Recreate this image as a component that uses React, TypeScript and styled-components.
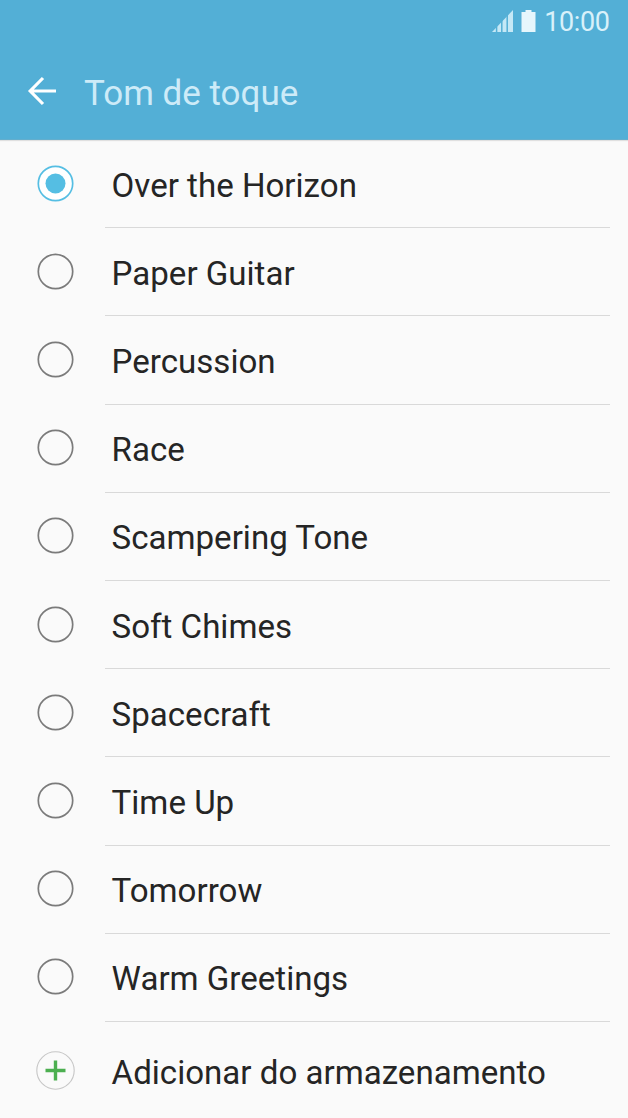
import React from 'react';
import styled, { createGlobalStyle } from 'styled-components';

const GlobalStyle = createGlobalStyle`
  * { box-sizing: border-box; }
  body { margin: 0; background: #fafafa; font-family: Roboto, sans-serif; overflow: hidden; }
`;

const Screen = styled.div`
  width: 628px;
  height: 1118px;
  background: #fafafa;
  overflow: hidden;
`;

const Header = styled.header`
  height: 140px;
  background: #53afd6;
  border-bottom: 1px solid #64aecd;
  box-shadow: 0 1px 1px rgba(0, 0, 0, 0.1);
`;

const StatusBar = styled.div`
  height: 43px;
  padding-right: 18.5px;
  display: flex;
  justify-content: flex-end;
  align-items: center;
  color: #d9f1fa;
`;

const StatusIcons = styled.svg`
  display: block;
  margin-right: 7px;
`;

const Clock = styled.span`
  font-size: 27px;
  line-height: 32px;
  letter-spacing: -0.4px;
`;

const TitleBar = styled.div`
  height: 96px;
  padding-left: 27px;
  display: flex;
  align-items: center;
`;

const BackArrow = styled.svg`
  display: block;
  margin-right: 27px;
`;

const Title = styled.h1`
  margin: 6px 0 0;
  font-size: 35px;
  font-weight: 400;
  line-height: 42px;
  color: #cdebf8;
`;

const List = styled.ul`
  margin: 0;
  padding: 0;
  list-style: none;
`;

const Row = styled.li<{ $last?: boolean }>`
  display: flex;
  height: ${p => (p.$last ? '98px' : '88.2px')};
  padding: ${p => (p.$last ? '2px 18px 0 36px' : '0 18px 0 37px')};
`;

const IconSlot = styled.div<{ $width: number }>`
  width: ${p => p.$width}px;
  padding-bottom: 2px;
  display: flex;
  align-items: center;
`;

const Label = styled.div<{ $divider?: boolean }>`
  flex: 1;
  display: flex;
  align-items: center;
  padding: ${p => (p.$divider ? '4px' : '2px')} 0 0 6.6px;
  font-size: 33.1px;
  line-height: 40px;
  color: #252525;
  white-space: nowrap;
  border-bottom: ${p => (p.$divider ? '1px solid #d9d9d9' : 'none')};
`;

const Radio = ({ checked }: { checked: boolean }) => (
  <svg width="37" height="37" viewBox="0 0 37 37">
    <circle cx="18.5" cy="18.5" r="17.2" fill={checked ? '#fff' : 'none'} stroke={checked ? '#55bee3' : '#7b7b7b'} strokeWidth="1.7" />
    {checked && <circle cx="18.5" cy="18.5" r="10" fill="#55bee3" />}
  </svg>
);

const tones = [
  'Over the Horizon', 'Paper Guitar', 'Percussion', 'Race', 'Scampering Tone',
  'Soft Chimes', 'Spacecraft', 'Time Up', 'Tomorrow', 'Warm Greetings',
];

export default function App() {
  return (
    <Screen>
      <GlobalStyle />
      <Header>
        <StatusBar>
          <StatusIcons width="45" height="23" viewBox="0 0 45 23">
            <path d="M0 22 L21 0 V22 Z" fill="#c5e8f6" />
            <path d="M4.6 12V23M9.8 6V23M15.2 0V23" stroke="#53afd6" strokeWidth="1.5" />
            <path d="M29.5 2h4V0h6v2h4v20H29.5Z" fill="#e6f6fc" />
          </StatusIcons>
          <Clock>10:00</Clock>
        </StatusBar>
        <TitleBar>
          <BackArrow width="30" height="30" viewBox="0 0 30 30" fill="none" stroke="#fff" strokeWidth="3.2">
            <path d="M16 2 L3.2 15 L16 28 M3.2 15 H29" />
          </BackArrow>
          <Title>Tom de toque</Title>
        </TitleBar>
      </Header>
      <List>
        {tones.map((tone, i) => (
          <Row key={tone}>
            <IconSlot $width={68}><Radio checked={i === 0} /></IconSlot>
            <Label $divider>{tone}</Label>
          </Row>
        ))}
        <Row $last>
          <IconSlot $width={69}>
            <svg width="39" height="39" viewBox="0 0 39 39">
              <circle cx="19.5" cy="19.5" r="18.7" fill="none" stroke="#c6c6c6" strokeWidth="1.1" />
              <path d="M19.5 9.5v20M9.5 19.5h20" stroke="#4caf50" strokeWidth="3.4" />
            </svg>
          </IconSlot>
          <Label>Adicionar do armazenamento</Label>
        </Row>
      </List>
    </Screen>
  );
}
